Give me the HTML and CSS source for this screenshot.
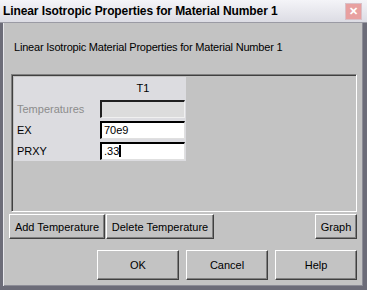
FILE: index.html
```html
<!DOCTYPE html>
<html>
<head>
    <meta charset="UTF-8">
    <title>Linear Isotropic Properties</title>
    <link rel="stylesheet" href="styles.css">
</head>
<body>
    <div class="window">
        <div class="titlebar">
            <span class="title">Linear Isotropic Properties for Material Number 1</span>
            <span class="close">&#x2715;</span>
        </div>
        <div class="frame">
            <p class="heading">Linear Isotropic Material Properties for Material Number 1</p>

            <div class="panel">
                <div class="grid">
                    <div class="cell"></div>
                    <div class="cell col-head">T1</div>
                    <div class="cell label disabled">Temperatures</div>
                    <div class="cell"><div class="field off"></div></div>
                    <div class="cell label">EX</div>
                    <div class="cell"><div class="field">70e9</div></div>
                    <div class="cell label">PRXY</div>
                    <div class="cell"><div class="field">.33<span class="caret"></span></div></div>
                </div>
            </div>

            <div class="btn-row">
                <button class="btn add">Add Temperature</button>
                <button class="btn del">Delete Temperature</button>
                <span class="spacer"></span>
                <button class="btn graph">Graph</button>
            </div>

            <div class="btn-row main">
                <button class="btn big">OK</button>
                <button class="btn big">Cancel</button>
                <button class="btn big">Help</button>
            </div>
        </div>
    </div>
</body>
</html>
```

FILE: styles.css
```css
body {
    margin: 0;
    font-family: "Liberation Sans", Arial, sans-serif;
    font-size: 11px;
    background: #c3c3c3;
}
.window {
    width: 367px;
    height: 290px;
    display: flex;
    flex-direction: column;
    overflow: hidden;
}
.titlebar {
    height: 22px;
    display: flex;
    align-items: center;
    justify-content: space-between;
    padding: 0 5px 0 3px;
    background: linear-gradient(to bottom, #f4f4f8, #dcdce4);
    border-bottom: 1px solid #9a9aa4;
}
.title {
    font-weight: bold;
    font-size: 12px;
    color: #000;
    letter-spacing: -0.1px;
}
.close {
    width: 15px;
    height: 15px;
    background: #e8a0a0;
    border: 1px solid #d8c0c8;
    color: #fff;
    font-size: 11px;
    font-weight: bold;
    display: flex;
    align-items: center;
    justify-content: center;
}
.frame {
    flex: 1;
    background: #c3c3c3;
    border-left: 3px solid #6c6c78;
    border-right: 4px solid #6c6c78;
    border-bottom: 4px solid #6c6c78;
    box-shadow: inset 1px 0 #e8e8ec, inset -1px -1px #8c8c96;
    padding: 0 6px 0 8px;
    display: flex;
    flex-direction: column;
}
.heading {
    margin: 18px 0 0 3px;
    height: 16px;
    color: #000;
    letter-spacing: -0.2px;
}
.panel {
    margin-top: 17px;
    height: 134px;
    border: 1px solid;
    border-color: #808080 #ffffff #ffffff #808080;
    box-shadow: inset 1px 1px #404040;
    padding: 2px 0 0 2px;
}
.grid {
    width: 172px;
    height: 84px;
    background: #dcdce0;
    display: grid;
    grid-template-columns: 86px 86px;
    grid-template-rows: 21px 21px 21px 21px;
}
.cell {
    display: flex;
    align-items: center;
}
.col-head {
    justify-content: center;
}
.label {
    padding-left: 3px;
    color: #000;
}
.label.disabled {
    color: #8c8c8c;
}
.field {
    width: 80px;
    height: 15px;
    background: #fff;
    border-top: 2px solid #000;
    border-left: 2px solid #000;
    border-right: 1px solid #e0e0e0;
    border-bottom: 1px solid #e0e0e0;
    padding-left: 2px;
    line-height: 15px;
    color: #000;
}
.field.off {
    background: #dcdcdc;
    border-color: #202020 #f0f0f0 #f0f0f0 #202020;
}
.caret {
    display: inline-block;
    width: 2px;
    height: 12px;
    background: #000;
    vertical-align: -2px;
}
.btn-row {
    display: flex;
    margin-top: 2px;
}
.btn-row.main {
    margin-top: 11px;
    justify-content: flex-end;
    gap: 7px;
}
.spacer {
    flex: 1;
}
.btn {
    height: 25px;
    padding: 0;
    font-family: inherit;
    font-size: 11px;
    color: #000;
    background: #c3c3c3;
    border: 1px solid;
    border-color: #ffffff #404040 #404040 #ffffff;
    box-shadow: inset -1px -1px #808080;
    margin: 0;
}
.btn.add {
    width: 96px;
    margin-left: -2px;
}
.btn.del {
    width: 108px;
    margin-left: 1px;
}
.btn.graph {
    width: 42px;
}
.btn.big {
    width: 82px;
    height: 30px;
}
```
